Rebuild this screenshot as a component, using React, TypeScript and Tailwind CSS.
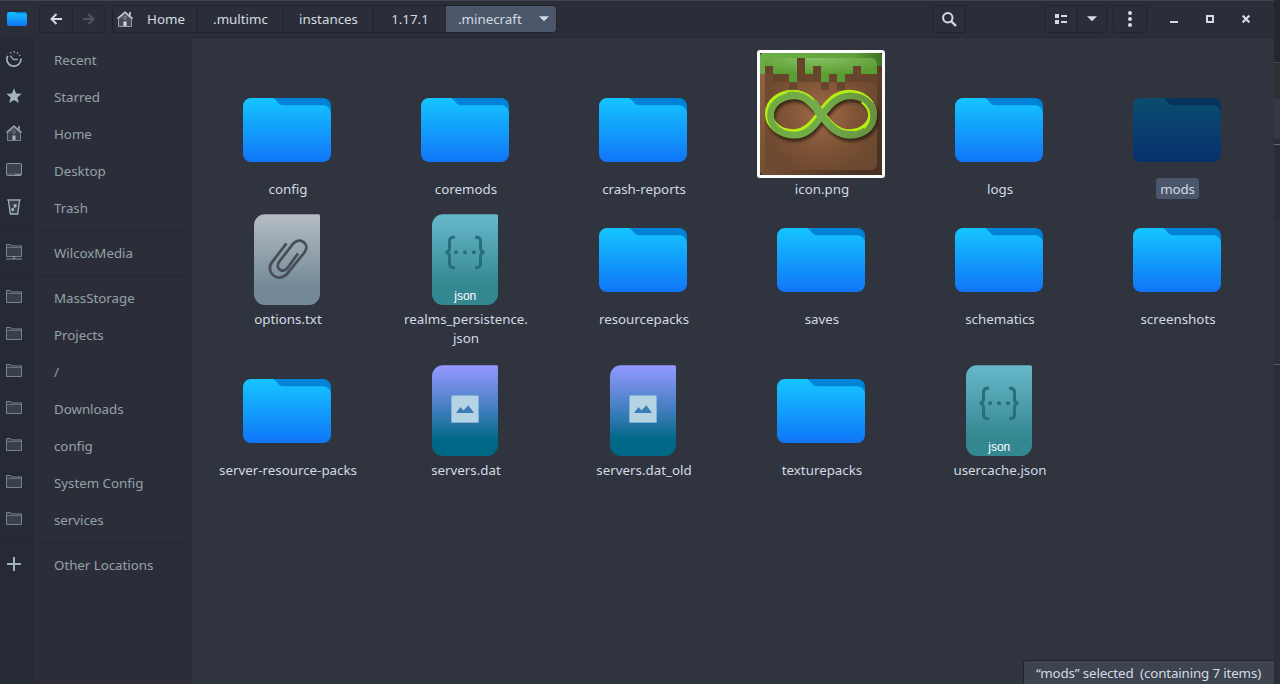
import React from "react";

type Kind = "folder" | "attach" | "json" | "image" | "thumb";

function Folder({ dim = false }: { dim?: boolean }) {
  const id = dim ? "folderDim" : "folder";
  return (
    <svg width="96" height="96" viewBox="0 0 96 96">
      <defs>
        <linearGradient id={id} x1="0" y1="16" x2="0" y2="80" gradientUnits="userSpaceOnUse">
          <stop offset="0" stopColor={dim ? "#0a4d6f" : "#15c5ff"} />
          <stop offset="1" stopColor={dim ? "#08306e" : "#1075f8"} />
        </linearGradient>
      </defs>
      <path d="M30 16H84a8 8 0 0 1 8 8V50H30z" fill={dim ? "#05335c" : "#0082d8"} />
      <path
        d="M12 16H32.500c5 0 6 7.200 11.500 7.200H84a8 8 0 0 1 8 8V72a8 8 0 0 1-8 8H12a8 8 0 0 1-8-8V24a8 8 0 0 1 8-8z"
        fill={`url(#${id})`}
      />
    </svg>
  );
}

const PAGE = "M26 2.200H79.500a1.500 1.500 0 0 1 1.500 1.500V82a11 11 0 0 1-11 11H26a11 11 0 0 1-11-11V13.200a11 11 0 0 1 11-11z";

function Attach() {
  return (
    <svg width="96" height="96" viewBox="0 0 96 96">
      <defs>
        <linearGradient id="attach" x1="0" y1="0" x2="0" y2="1">
          <stop offset="0" stopColor="#b5bcc3" />
          <stop offset=".8" stopColor="#748a98" />
          <stop offset="1" stopColor="#748a98" />
        </linearGradient>
      </defs>
      <path d={PAGE} fill="url(#attach)" />
      <path
        d="M47.500 31.300L33.200 49.900C25.500 60 38.500 71.500 48 62L65.500 40.300C71.500 32 61 24.500 54.300 31.500L40.300 49.500C35.500 56.500 43.500 62 48.500 56L59 41.500"
        fill="none"
        stroke="#484e57"
        strokeWidth="2.800"
      />
    </svg>
  );
}

function Json() {
  return (
    <svg width="96" height="96" viewBox="0 0 96 96">
      <defs>
        <linearGradient id="json" x1="0" y1="0" x2="0" y2="1">
          <stop offset="0" stopColor="#68b8cc" />
          <stop offset=".8" stopColor="#338790" />
          <stop offset="1" stopColor="#338790" />
        </linearGradient>
      </defs>
      <path d={PAGE} fill="url(#json)" />
      <g fill="none" stroke="#276f7a" strokeWidth="3">
        <path d="M38 25.300h-1.500q-4 0-4 4.200v6q0 4.800-4 4.800q4 0 4 4.800v6.500q0 4.200 4 4.200H38" />
        <path d="M58 25.300h1.500q4 0 4 4.200v6q0 4.800 4 4.800q-4 0-4 4.800v6.500q0 4.200-4 4.200H58" />
      </g>
      <g fill="#276f7a">
        <circle cx="39" cy="40.300" r="2" />
        <circle cx="48" cy="40.300" r="2" />
        <circle cx="57" cy="40.300" r="2" />
      </g>
      <text x="48.300" y="88" textAnchor="middle" fontSize="12" fill="#fff" fontFamily="Liberation Sans, sans-serif">
        json
      </text>
    </svg>
  );
}

function ImageFile() {
  return (
    <svg width="96" height="96" viewBox="0 0 96 96">
      <defs>
        <linearGradient id="image" x1="0" y1="0" x2="0" y2="1">
          <stop offset="0" stopColor="#9499ff" />
          <stop offset=".5" stopColor="#3f7dbd" />
          <stop offset=".82" stopColor="#006886" />
          <stop offset="1" stopColor="#006886" />
        </linearGradient>
      </defs>
      <path d={PAGE} fill="url(#image)" />
      <rect x="34" y="32" width="28" height="28" rx="1.500" fill="#82b2d6" />
      <rect x="35" y="33" width="26" height="26" rx="1" fill="#b4d4e4" />
      <path d="M39 50L43.500 44L46.500 47.500L51.300 42.200L57 50z" fill="#3a7cb8" />
    </svg>
  );
}

const LOOP_L = "M213 222C190 254 168 281 130 281C90 281 58 256 58 222C58 188 90 163 130 163C168 163 190 190 213 222";
const LOOP_R = "M213 222C236 190 260 163 298 163C338 163 368 188 368 222C368 256 338 281 298 281C260 281 236 254 213 222";

function Thumb() {
  return (
    <div className="h-32 w-32 shrink-0 rounded-[3px] border-[3px] border-[#fbfbfb] bg-[#28292c]">
      <svg width="122" height="122" viewBox="30 39 366 366">
        <defs>
          <radialGradient id="dirt" cx=".5" cy=".5" r=".55">
            <stop offset="0" stopColor="#a06b48" />
            <stop offset=".55" stopColor="#805436" />
            <stop offset="1" stopColor="#6c4930" />
          </radialGradient>
          <linearGradient id="edge" x1="0" y1="0" x2="1" y2=".7">
            <stop offset="0" stopColor="#95694a" />
            <stop offset=".45" stopColor="#775033" />
            <stop offset="1" stopColor="#4a3222" />
          </linearGradient>
          <linearGradient id="grass" x1="0" y1="0" x2="1" y2="0">
            <stop offset="0" stopColor="#6bae48" />
            <stop offset=".75" stopColor="#62a23e" />
            <stop offset="1" stopColor="#3d7326" />
          </linearGradient>
          <radialGradient id="grassIn" cx=".45" cy="0" r=".7">
            <stop offset="0" stopColor="#88c062" />
            <stop offset="1" stopColor="#5a9d32" />
          </radialGradient>
          <linearGradient id="band" x1="45" y1="0" x2="381" y2="0" gradientUnits="userSpaceOnUse">
            <stop offset="0" stopColor="#6fab40" />
            <stop offset=".5" stopColor="#72ad4a" />
            <stop offset="1" stopColor="#668f3e" />
          </linearGradient>
          <filter id="soft" x="-20%" y="-20%" width="140%" height="140%">
            <feGaussianBlur stdDeviation="4" />
          </filter>
          <clipPath id="tile">
            <rect x="30" y="39" width="366" height="366" rx="11" />
          </clipPath>
          <clipPath id="inner">
            <rect x="45" y="54" width="336" height="336" rx="18" />
          </clipPath>
        </defs>
        <g clipPath="url(#tile)">
          <rect x="30" y="39" width="366" height="366" fill="url(#edge)" />
          <path d="M30 39H396V78H381V102H30z" fill="url(#grass)" />
          <rect x="45" y="54" width="336" height="336" rx="18" fill="url(#dirt)" />
          <path
            clipPath="url(#inner)"
            d="M45 54H381V102H333V78H309V102H285V126H261V102H237V126H213V78H189V102H165V54H141V126H117V102H69V78H45z"
            fill="url(#grassIn)"
          />
          <path
            d="M45 78H69V102H117V126H141V54H165V102H189V78H213V126H237V102H261V126H285V102H309V78H333V102H381V126H285V150H261V126H237V150H213V126H189V126H141V150H117V126H69V102H45z"
            fill="#65432a"
            fillOpacity=".88"
          />
          <rect x="381" y="78" width="15" height="24" fill="#5b3a26" />
          <g transform="translate(6 12)" fill="none" stroke="#24160b" strokeOpacity=".8" strokeWidth="24" filter="url(#soft)">
            <path d={LOOP_L} />
            <path d={LOOP_R} />
          </g>
          <g fill="none" stroke="#b4ee12" strokeWidth="25" transform="translate(-.5 -1)">
            <path d={LOOP_L} />
            <path d={LOOP_R} />
          </g>
          <g fill="none" stroke="url(#band)" strokeWidth="20">
            <path d={LOOP_L} transform="translate(3.5 4.500)" />
            <path d={LOOP_R} transform="translate(2.500 4.500)" />
          </g>
          <path
            d="M356 190C372 218 366 252 340 272"
            fill="none"
            stroke="url(#band)"
            strokeWidth="17"
            transform="translate(7 2)"
          />
          <path d="M336 184C364 204 366 240 342 262" fill="none" stroke="#b4ee12" strokeWidth="6" transform="translate(-1 3)" />
          <path
            d="M112 163C162 156 186 186 213 222C240 258 264 288 314 281"
            fill="none"
            stroke="url(#band)"
            strokeWidth="22"
            transform="translate(0 2)"
          />
          <path d="M183 184L200 180L244 252L232 262L194 222z" fill="#72ad4a" />
          <path d="M100 156C138 147 168 157 190 177" fill="none" stroke="#a6e318" strokeWidth="5" />
        </g>
      </svg>
    </div>
  );
}

function FileIcon({ kind, selected }: { kind: Kind; selected?: boolean }) {
  if (kind === "folder") return <Folder dim={selected} />;
  if (kind === "attach") return <Attach />;
  if (kind === "json") return <Json />;
  if (kind === "image") return <ImageFile />;
  return <Thumb />;
}

const files: { name: string; kind: Kind; selected?: boolean }[] = [
  { name: "config", kind: "folder" },
  { name: "coremods", kind: "folder" },
  { name: "crash-reports", kind: "folder" },
  { name: "icon.png", kind: "thumb" },
  { name: "logs", kind: "folder" },
  { name: "mods", kind: "folder", selected: true },
  { name: "options.txt", kind: "attach" },
  { name: "realms_persistence.\njson", kind: "json" },
  { name: "resourcepacks", kind: "folder" },
  { name: "saves", kind: "folder" },
  { name: "schematics", kind: "folder" },
  { name: "screenshots", kind: "folder" },
  { name: "server-resource-packs", kind: "folder" },
  { name: "servers.dat", kind: "image" },
  { name: "servers.dat_old", kind: "image" },
  { name: "texturepacks", kind: "folder" },
  { name: "usercache.json", kind: "json" },
];

function HomeIcon() {
  return (
    <svg width="16" height="16" viewBox="0 0 16 16" fill="none" stroke="currentColor">
      <path d="M1.500 8v7.500h13V8L8 2.500z" fill="currentColor" fillOpacity=".18" strokeOpacity=".6" />
      <path d="M.4 7.600L8 1l7.600 6.600" strokeWidth="1.300" />
      <path d="M13 1v3.500" strokeWidth="1.600" />
      <circle cx="8" cy="6.800" r="1.500" strokeOpacity=".45" />
      <path d="M6.500 10.500h3v4.500h-3z" fill="currentColor" stroke="none" />
    </svg>
  );
}

function SideIcon({ name }: { name: string }) {
  if (name === "home") return <HomeIcon />;
  return (
    <svg width="16" height="16" viewBox="0 0 16 16" fill="none" stroke="currentColor">
      {name === "recent" && (
        <>
          <path d="M1.800 4.800A7 7 0 1 0 14.900 7.500" strokeWidth="1.700" />
          <path d="M4.200 4.700L7.500 8.500H12" strokeWidth="1.300" strokeOpacity=".85" />
          <path d="M4.200 2.100l.8-.5M7.600 1h1M11 1.600l.9.500M13.500 3.900l.5.800" strokeWidth="1.800" />
        </>
      )}
      {name === "star" && (
        <path d="M8 .3l2.100 5.100 5.600.4-4.300 3.600 1.400 5.600L8 12l-4.800 3 1.400-5.600L.3 5.800l5.600-.4z" fill="currentColor" stroke="none" />
      )}
      {name === "desktop" && (
        <>
          <rect x=".5" y="1.500" width="15" height="12" rx="1" fill="currentColor" fillOpacity=".18" strokeOpacity=".75" />
          <path d="M1 12h8" strokeDasharray="1.500 1" strokeOpacity=".6" />
          <path d="M9 12.500h6" strokeOpacity=".7" strokeWidth="1.500" />
        </>
      )}
      {name === "trash" && (
        <>
          <path d="M1.200 1h13.600" strokeWidth="1.400" />
          <path d="M2.500 1.500L4.300 15h7.400L13.500 1.500" fill="currentColor" fillOpacity=".15" strokeWidth="1.300" />
          <path d="M7.500 5.500l3-.5v3l-2.500 1zM5 9.500l2.500-.8 1 2.800-2.500 1z" fill="currentColor" stroke="none" />
        </>
      )}
      {(name === "folder" || name === "remote") && (
        <g transform={name === "folder" ? "translate(0 1)" : undefined}>
          <path d="M.5 12.500V.5h4l1.200 1.400h9.800v10.600z" fill="currentColor" fillOpacity=".16" strokeOpacity=".62" />
          <path d="M1 3.500h14" strokeOpacity=".4" />
        </g>
      )}
      {name === "remote" && (
        <>
          <path d="M0 15h16" strokeOpacity=".55" strokeWidth="1.500" />
          <path d="M8 12v3" strokeWidth="2" strokeOpacity=".5" />
        </>
      )}
      {name === "plus" && <path d="M8 1v14M1 8h14" strokeWidth="2" />}
    </svg>
  );
}

const places: [string, string][][] = [
  [["recent", "Recent"], ["star", "Starred"], ["home", "Home"], ["desktop", "Desktop"], ["trash", "Trash"]],
  [["remote", "WilcoxMedia"]],
  [
    ["folder", "MassStorage"],
    ["folder", "Projects"],
    ["folder", "/"],
    ["folder", "Downloads"],
    ["folder", "config"],
    ["folder", "System Config"],
    ["folder", "services"],
  ],
  [["plus", "Other Locations"]],
];

const group = "flex h-7 overflow-hidden rounded-[4px] border border-[#20232b] bg-[#2b2e39]";
const cell = "flex items-center justify-center";

function Caret() {
  return (
    <svg width="10" height="6" viewBox="0 0 10 6" fill="currentColor">
      <path d="M0 .3h10L5 5.300z" />
    </svg>
  );
}

function Header() {
  return (
    <header className="flex h-[38px] shrink-0 items-start border-t border-b border-t-[#414551] border-b-[#282b35] bg-[#2b2e39] pt-1 text-[#d3dae3]">
      <div className="flex h-7 w-[39px] items-center pl-[7px]">
        <svg width="20" height="14" viewBox="0 0 20 14">
          <defs>
            <linearGradient id="app" x1="0" y1="0" x2="0" y2="1">
              <stop offset="0" stopColor="#15c0ff" />
              <stop offset="1" stopColor="#1075f8" />
            </linearGradient>
          </defs>
          <path d="M7 0h11a2 2 0 0 1 2 2v6H7z" fill="#0082d8" />
          <path d="M2 0h5.500l2 1.500H18a2 2 0 0 1 2 2V12a2 2 0 0 1-2 2H2a2 2 0 0 1-2-2V2a2 2 0 0 1 2-2z" fill="url(#app)" />
        </svg>
      </div>
      <div className={`${group} w-[67px]`}>
        <div className={`${cell} w-[33px] border-r border-[#20232b]`}>
          <svg width="12" height="12" viewBox="0 0 12 12" fill="none" stroke="currentColor" strokeWidth="2">
            <path d="M6.500 1L1.500 6l5 5M1.500 6H12" />
          </svg>
        </div>
        <div className={`${cell} w-8 text-[#505461]`}>
          <svg width="12" height="12" viewBox="0 0 12 12" fill="none" stroke="currentColor" strokeWidth="2">
            <path d="M5.500 1l5 5-5 5M10.500 6H0" />
          </svg>
        </div>
      </div>
      <div className={`${group} ml-[6px] w-[445px]`}>
        <div className="flex w-[85px] items-center border-r border-[#20232b] pl-1">
          <HomeIcon />
          <span className="ml-[14px]">Home</span>
        </div>
        <div className={`${cell} w-[86px] border-r border-[#20232b]`}>.multimc</div>
        <div className={`${cell} w-[90px] border-r border-[#20232b]`}>instances</div>
        <div className={`${cell} w-[72px]`}>1.17.1</div>
        <div className="flex flex-1 items-center bg-[#4b566a] pl-3">
          <span>.minecraft</span>
          <span className="ml-[17px]"><Caret /></span>
        </div>
      </div>
      <div className={`${group} ${cell} ml-[375px] w-[34px]`}>
        <svg width="15" height="15" viewBox="0 0 15 15" fill="none" stroke="currentColor" strokeWidth="2">
          <circle cx="5.800" cy="5.800" r="4.700" />
          <path d="M9 9l5 5" strokeWidth="2.400" />
        </svg>
      </div>
      <div className={`${group} ml-[78px] w-[63px]`}>
        <div className={`${cell} w-[33px] border-r border-[#20232b]`}>
          <svg width="12" height="10" viewBox="0 0 12 10" fill="currentColor">
            <path d="M0 0h4v4H0zM0 6h4v4H0zM6 1h6v2H6zM6 7h6v2H6z" />
          </svg>
        </div>
        <div className={`${cell} flex-1`}><Caret /></div>
      </div>
      <div className={`${group} ${cell} ml-[6px] w-[34px]`}>
        <svg width="4" height="16" viewBox="0 0 4 16" fill="currentColor">
          <circle cx="2" cy="2" r="2" />
          <circle cx="2" cy="8" r="2" />
          <circle cx="2" cy="14" r="2" />
        </svg>
      </div>
      <div className="flex h-7 items-center gap-7 pl-[23px]">
        <svg width="8" height="8" viewBox="0 0 8 8" fill="currentColor"><path d="M0 6h8v2H0z" /></svg>
        <svg width="8" height="8" viewBox="0 0 8 8" fill="none" stroke="currentColor" strokeWidth="2"><path d="M1 1h6v6H1z" /></svg>
        <svg width="8" height="8" viewBox="0 0 8 8" fill="none" stroke="currentColor" strokeWidth="2.200"><path d="M.6.6l6.800 6.800M7.400.6L.6 7.400" /></svg>
      </div>
    </header>
  );
}

function Sidebar() {
  return (
    <aside className="flex w-[192px] shrink-0 flex-col border-r border-[#292c36] bg-[linear-gradient(to_right,#262a34_34px,#2b2e39_34px)] pt-1">
      {places.map((section, i) => (
        <div key={i} className={i ? "mt-[3px] border-t border-[#252831] pt-1" : ""}>
          {section.map(([icon, label]) => (
            <div key={label} className="flex h-[37px] items-center pl-[6px]">
              <span className="mb-[3px] w-12 text-[#a3b4b9]">
                <SideIcon name={icon} />
              </span>
              <span className="tracking-[-0.03px] text-[#93a2a7]">{label}</span>
            </div>
          ))}
        </div>
      ))}
    </aside>
  );
}

export default function App() {
  return (
    <div className="flex h-[684px] w-[1280px] overflow-hidden bg-[#2f343f] font-['Noto_Sans',sans-serif] text-[13.333px] leading-[19px]">
      <div className="flex w-[1274px] flex-col">
        <Header />
        <div className="flex min-h-0 flex-1">
          <Sidebar />
          <main className="flex flex-1 flex-col justify-between">
            <div className="grid grid-cols-[repeat(6,178px)] grid-rows-[162px_151px_151px] pt-3 pl-[6px]">
              {files.map((f, i) => (
                <div key={f.name} className="flex flex-col items-center">
                  <div className={i < 6 ? "flex h-32 items-end" : "flex h-24 items-end"}>
                    <FileIcon kind={f.kind} selected={f.selected} />
                  </div>
                  <span
                    className={
                      f.selected
                        ? "ml-px rounded-[3px] bg-[#4b566a] px-1 pt-[2px] text-center tracking-[-0.1px] text-[#d3dae3]"
                        : "mt-[2px] ml-[2px] text-center whitespace-pre text-[#d3dae3]"
                    }
                  >
                    {f.name}
                  </span>
                </div>
              ))}
            </div>
            <div className="h-6 self-end rounded-tl-[3px] border-t border-l border-[#22252d] bg-[#3e4350] pt-[3px] pr-[13px] pl-3 tracking-[-0.14px] whitespace-pre text-[#d3dae3]">
              “mods” selected  (containing 7 items)
            </div>
          </main>
        </div>
      </div>
      <div className="flex w-[6px] flex-col bg-[#2b2e39]">
        <div className="h-[62px] bg-[#25272e]" />
        <div className="h-[37px] border-t border-[#44464b] bg-[#2e3033]" />
        <div className="h-10 bg-[#343745]" />
        <div className="h-[5px] bg-[#2b2e39]" />
        <div className="h-px bg-[#666974]" />
        <div className="h-[75px] bg-[#2b2d36]" />
        <div className="h-[145px] border-b border-[#555863] bg-[#2d303b]" />
      </div>
    </div>
  );
}
